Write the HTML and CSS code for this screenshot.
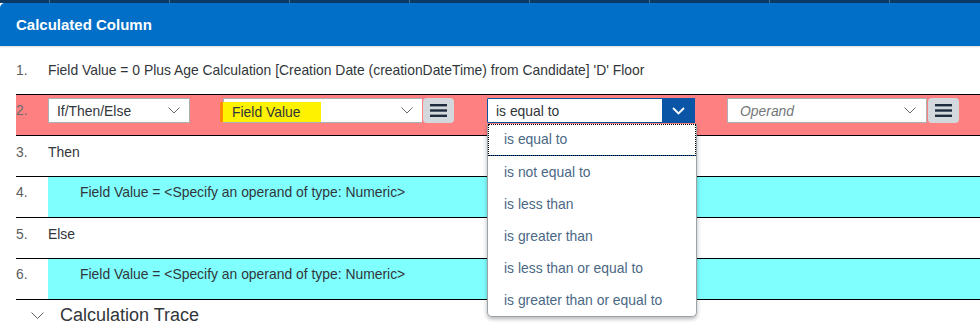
FILE: index.html
```html
<!DOCTYPE html>
<html lang="en">
<head>
    <meta charset="UTF-8">
    <title>Calculated Column</title>
    <link rel="stylesheet" href="styles.css">
</head>
<body>
    <div class="topbar"></div>

    <div class="panel">
        <div class="panel-header">Calculated Column</div>

        <div class="rows">
            <div class="row">
                <span class="row-num">1.</span>
                <span class="row-text">Field Value = 0 Plus Age Calculation [Creation Date (creationDateTime) from Candidate] 'D' Floor</span>
            </div>

            <div class="row row-edit">
                <span class="row-num">2.</span>
                <div class="select select-type">
                    <span class="select-value">If/Then/Else</span>
                    <svg class="chev" width="12" height="7" viewBox="0 0 12 7"><path d="M0.5 0.5 L6 6 L11.5 0.5" fill="none" stroke="#6a6d70" stroke-width="1"/></svg>
                </div>
                <div class="select select-field">
                    <span class="highlight">Field Value</span>
                    <svg class="chev" width="12" height="7" viewBox="0 0 12 7"><path d="M0.5 0.5 L6 6 L11.5 0.5" fill="none" stroke="#6a6d70" stroke-width="1"/></svg>
                </div>
                <button class="menu-btn">
                    <svg width="17" height="13" viewBox="0 0 17 13"><rect x="0" y="0" width="17" height="2.4" fill="#1d2d3e"/><rect x="0" y="5.3" width="17" height="2.4" fill="#1d2d3e"/><rect x="0" y="10.6" width="17" height="2.4" fill="#1d2d3e"/></svg>
                </button>

                <div class="select select-op open">
                    <span class="select-value">is equal to</span>
                    <span class="op-arrow">
                        <svg width="13" height="8" viewBox="0 0 13 8"><path d="M1 1 L6.5 6.5 L12 1" fill="none" stroke="#ffffff" stroke-width="1.8"/></svg>
                    </span>
                    <ul class="popup">
                        <li class="popup-item focused">is equal to</li>
                        <li class="popup-item">is not equal to</li>
                        <li class="popup-item">is less than</li>
                        <li class="popup-item">is greater than</li>
                        <li class="popup-item">is less than or equal to</li>
                        <li class="popup-item">is greater than or equal to</li>
                    </ul>
                </div>

                <div class="select select-operand">
                    <span class="placeholder">Operand</span>
                    <svg class="chev" width="12" height="7" viewBox="0 0 12 7"><path d="M0.5 0.5 L6 6 L11.5 0.5" fill="none" stroke="#6a6d70" stroke-width="1"/></svg>
                </div>
                <button class="menu-btn">
                    <svg width="17" height="13" viewBox="0 0 17 13"><rect x="0" y="0" width="17" height="2.4" fill="#1d2d3e"/><rect x="0" y="5.3" width="17" height="2.4" fill="#1d2d3e"/><rect x="0" y="10.6" width="17" height="2.4" fill="#1d2d3e"/></svg>
                </button>
            </div>

            <div class="row">
                <span class="row-num">3.</span>
                <span class="row-text">Then</span>
            </div>

            <div class="row row-action">
                <span class="row-num">4.</span>
                <span class="row-text action">Field Value = &lt;Specify an operand of type: Numeric&gt;</span>
            </div>

            <div class="row">
                <span class="row-num">5.</span>
                <span class="row-text">Else</span>
            </div>

            <div class="row row-action">
                <span class="row-num">6.</span>
                <span class="row-text action">Field Value = &lt;Specify an operand of type: Numeric&gt;</span>
            </div>
        </div>

        <div class="trace">
            <svg width="13" height="7" viewBox="0 0 13 7"><path d="M0.5 0.5 L6.5 6.5 L12.5 0.5" fill="none" stroke="#5b5e61" stroke-width="1"/></svg>
            <span>Calculation Trace</span>
        </div>
    </div>
</body>
</html>
```

FILE: styles.css
```css
* {
    margin: 0;
    padding: 0;
    box-sizing: border-box;
}

body {
    font-family: 'Liberation Sans', Arial, sans-serif;
    font-size: 13.9px;
    color: #32363a;
    background: #ffffff;
    width: 980px;
    overflow: hidden;
}

.topbar {
    height: 3px;
    background: repeating-linear-gradient(90deg, #0b3a66 0, #0b3a66 49px, #4b6d90 49px, #4b6d90 50px, #0b3a66 50px, #0b3a66 120px);
    background-color: #0b3a66;
}

.panel-header {
    height: 43px;
    line-height: 43px;
    padding-left: 16px;
    background: #016fc8;
    color: #ffffff;
    font-weight: bold;
    font-size: 15px;
    border-top-left-radius: 5px;
    box-shadow: 0 1px 2px rgba(0, 0, 0, 0.15);
}

.rows {
    margin-top: 8px;
    margin-left: 16px;
}

.row {
    display: flex;
    align-items: flex-start;
    min-height: 40px;
    line-height: 16px;
}

.row-num {
    width: 32px;
    padding-top: 8px;
    color: #5b5e61;
}

.row-text {
    padding-top: 8px;
}

.row-edit {
    min-height: 42px;
    background: #ff8080;
    border-top: 1px solid #000000;
    border-bottom: 1px solid #000000;
    padding-top: 3px;
}

.row-edit .row-num {
    padding-top: 0;
    line-height: 25px;
    color: #6a6d70;
}

.row-action {
    min-height: 42px;
    border-top: 1px solid #000000;
    border-bottom: 1px solid #000000;
}

.row-action .row-num {
    padding-top: 7px;
}

.row-text.action {
    flex: 1;
    align-self: stretch;
    background: #80ffff;
    padding-top: 7px;
    padding-left: 32px;
}

.select {
    position: relative;
    display: flex;
    align-items: center;
    height: 25px;
    background: #ffffff;
    border: 1px solid #a9b0b6;
    border-radius: 1px;
    line-height: 16px;
}

.select-value {
    flex: 1;
    padding-left: 8px;
}

.chev {
    margin-right: 9px;
}

.select-type {
    width: 142px;
}

.select-field {
    width: 199px;
    margin-left: 33px;
    border-right: none;
}

.highlight {
    width: 101px;
    height: 20px;
    line-height: 20px;
    margin-left: -4px;
    margin-right: auto;
    margin-top: 3px;
    padding-left: 9px;
    background: #fff200;
    border-left: 3px solid #ff8c00;
}

.menu-btn {
    width: 31px;
    height: 25px;
    margin-left: 1px;
    border: none;
    border-radius: 4px;
    background: #d3d8dc;
    display: flex;
    align-items: center;
    justify-content: center;
}

.select-op {
    width: 208px;
    margin-left: 33px;
    border-color: #0854a0;
}

.op-arrow {
    width: 33px;
    height: 25px;
    margin: -1px -1px -1px 0;
    background: #0a55a5;
    display: flex;
    align-items: center;
    justify-content: center;
}

.popup {
    position: absolute;
    top: 25px;
    left: -1px;
    width: 210px;
    list-style: none;
    background: #ffffff;
    border: 1px solid #9ba2a8;
    border-top: none;
    border-radius: 0 0 5px 5px;
    box-shadow: 0 2px 4px rgba(0, 0, 0, 0.3);
    z-index: 5;
}

.popup-item {
    height: 32px;
    line-height: 33px;
    padding-left: 16px;
    color: #4a6885;
}

.popup-item.focused {
    line-height: 31px;
    outline: 1px dotted #000000;
    outline-offset: -1px;
    border-bottom: 1px solid #0854a0;
}

.select-operand {
    width: 200px;
    margin-left: 32px;
}

.placeholder {
    flex: 1;
    padding-left: 12px;
    font-style: italic;
    color: #74777a;
}

.select-operand .chev {
    margin-right: 10px;
}

.trace {
    display: flex;
    align-items: center;
    gap: 16px;
    height: 31px;
    padding-left: 31px;
    font-size: 18px;
    color: #32363a;
}
```
